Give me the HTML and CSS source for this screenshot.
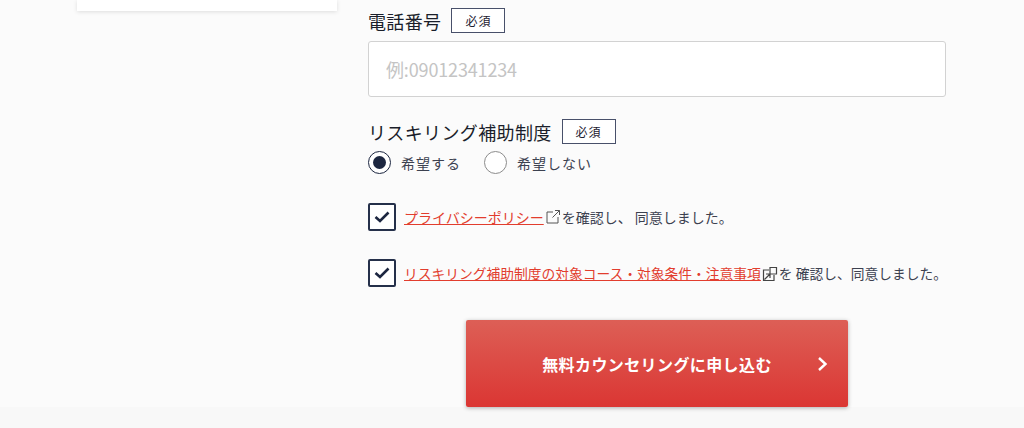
FILE: index.html
```html
<!DOCTYPE html>
<html lang="ja">
<head>
  <meta charset="UTF-8">
  <meta name="viewport" content="width=device-width, initial-scale=1.0">
  <title>無料カウンセリング</title>
  <link rel="stylesheet" href="styles.css">
</head>
<body>
  <div class="page">
    <!-- サイドのカード -->
    <aside class="side-card"></aside>

    <form class="form">
      <div class="label-row">
        <span class="label">電話番号</span>
        <span class="required">必須</span>
      </div>
      <input class="text-input" type="text" placeholder="例:09012341234">

      <div class="label-row label-row-second">
        <span class="label">リスキリング補助制度</span>
        <span class="required">必須</span>
      </div>
      <div class="radios">
        <span class="radio-item">
          <span class="radio radio-on"></span>
          <span class="radio-text">希望する</span>
        </span>
        <span class="radio-item">
          <span class="radio"></span>
          <span class="radio-text">希望しない</span>
        </span>
      </div>

      <div class="check-row check-row-first">
        <span class="checkbox">
          <svg width="18" height="14" viewBox="0 0 18 14"><path d="M2.500 7l4.500 4L15.500 2.500" fill="none" stroke="#1c2640" stroke-width="2.600"/></svg>
        </span>
        <p class="check-text"><a href="#">プライバシーポリシー</a><svg class="ext" width="16" height="16" viewBox="0 0 16 16"><path d="M8 3H2v11h11V8M10 1.500h4.500V6M14.500 1.500L7.500 8.500" fill="none" stroke="#555" stroke-width="1"/></svg>を確認し、 同意しました。</p>
      </div>

      <div class="check-row check-row-second">
        <span class="checkbox">
          <svg width="18" height="14" viewBox="0 0 18 14"><path d="M2.500 7l4.500 4L15.500 2.500" fill="none" stroke="#1c2640" stroke-width="2.600"/></svg>
        </span>
        <p class="check-text check-text-long"><a href="#">リスキリング補助制度の対象コース・対象条件・注意事項</a><svg class="ext ext-wide" width="16" height="16" viewBox="0 0 16 16"><path d="M7 4H1.500v10.500H12V9M8 1.500h6.500V8H8zM2.500 13.500L8 8M4 8h4v4" fill="none" stroke="#444" stroke-width="1.200"/></svg>を 確認し、同意しました。</p>
      </div>

      <div class="submit-wrap">
        <button class="submit" type="button">
          <span>無料カウンセリングに申し込む</span>
          <svg class="submit-arrow" width="12" height="16" viewBox="0 0 12 16"><path d="M2 2l6.500 6L2 14" fill="none" stroke="#fff" stroke-width="2.400"/></svg>
        </button>
      </div>
    </form>
  </div>
</body>
</html>
```

FILE: styles.css
```css
/* 全体 */
html, body {
  margin: 0;
  padding: 0;
}

body {
  height: 428px;
  overflow: hidden;
  background: linear-gradient(#fbfbfb 407px, #f8f8f8 407px);
  color: #1c2640;
  font-family: "Noto Sans CJK JP", "Noto Sans", sans-serif;
}

.page {
  display: flex;
  align-items: flex-start;
  padding-left: 77px;
}

/* サイドのカード */
.side-card {
  width: 260px;
  height: 11px;
  margin-right: 31px;
  background: #fff;
  box-shadow: 0 1px 4px rgba(0, 0, 0, 0.12);
}

/* フォーム */
.form {
  width: 578px;
  padding-top: 8px;
}

.label-row {
  display: flex;
  align-items: center;
  gap: 10px;
  height: 25px;
}

.label-row-second {
  margin-top: 22px;
}

.label {
  font-size: 18px;
  letter-spacing: 0.36px;
  color: #1a1e2a;
}

.required {
  display: flex;
  align-items: center;
  justify-content: center;
  width: 52px;
  height: 23px;
  border: 1px solid #48506a;
  background: #fff;
  font-size: 12px;
  letter-spacing: 1px;
  color: #1c2030;
}

.text-input {
  display: block;
  width: 100%;
  height: 56px;
  margin-top: 8px;
  padding: 0 17px;
  box-sizing: border-box;
  border: 1px solid #d2d2d2;
  border-radius: 3px;
  background: #fff;
  font-family: inherit;
  font-size: 18px;
  letter-spacing: -0.15px;
}

.text-input::placeholder {
  color: #c4c4c4;
}

/* ラジオ */
.radios {
  display: flex;
  gap: 23px;
  margin-top: 7px;
}

.radio-item {
  display: flex;
  align-items: center;
  gap: 10px;
}

.radio {
  width: 21px;
  height: 21px;
  border: 1px solid #8c8c8c;
  border-radius: 50%;
  background: #fff;
  display: flex;
  align-items: center;
  justify-content: center;
}

.radio-on {
  border-color: #1c2640;
}

.radio-on::before {
  content: "";
  width: 13px;
  height: 13px;
  border-radius: 50%;
  background: #1c2640;
}

.radio-text {
  font-size: 14px;
  letter-spacing: 1px;
  color: #3c4150;
}

/* チェックボックス */
.check-row {
  display: flex;
  align-items: center;
  gap: 8px;
  height: 28px;
}

.check-row-first {
  margin-top: 29px;
}

.check-row-second {
  margin-top: 28px;
}

.checkbox {
  flex-shrink: 0;
  width: 24px;
  height: 24px;
  border: 2px solid #25304a;
  border-radius: 2px;
  background: #fff;
  display: flex;
  align-items: center;
  justify-content: center;
}

.check-text {
  margin: 0;
  font-size: 14px;
  color: #3c4150;
  white-space: nowrap;
}

.check-text-long {
  font-size: 13.75px;
}

.check-text a {
  color: #e23d2e;
  text-decoration: underline;
}

.ext {
  margin: 0 1px;
  vertical-align: -2px;
}

.ext-wide {
  vertical-align: -3px;
}

/* 送信ボタン */
.submit-wrap {
  display: flex;
  justify-content: center;
  margin-top: 33px;
}

.submit {
  position: relative;
  width: 382px;
  height: 87px;
  border: none;
  border-radius: 2px;
  background: linear-gradient(#dd5f56, #db3633);
  box-shadow: 0 1px 4px rgba(0, 0, 0, 0.3);
  color: #fff;
  font-family: inherit;
  font-size: 16px;
  font-weight: 700;
  letter-spacing: 0.4px;
  cursor: pointer;
}

.submit-arrow {
  position: absolute;
  right: 19px;
  top: 36px;
}
```
